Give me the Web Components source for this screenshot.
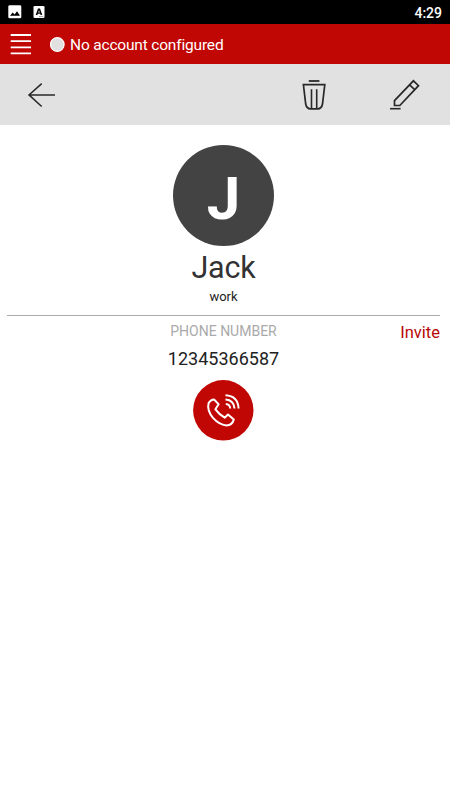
<!DOCTYPE html>
<html lang="en">
<head>
<meta charset="utf-8">
<title>Contact</title>
<style>
html,body{margin:0;height:100%;background:#fff}
body{font-family:Roboto,"Liberation Sans",sans-serif}
</style>
</head>
<body>
<contact-screen></contact-screen>
<script>
function define(name, html) {
  const template = document.createElement('template');
  template.innerHTML = html;
  customElements.define(name, class extends HTMLElement {
    constructor() {
      super();
      this.attachShadow({mode: 'open'}).append(template.content.cloneNode(true));
    }
  });
}

define('status-bar', `
<style>
:host{display:flex;align-items:center;height:24px;padding:0 8px;box-sizing:border-box;background:#000;color:#fff}
svg{display:block}
.a{margin-left:11px}
time{margin-left:auto;font-size:14px;line-height:16px;font-weight:500;padding-top:1px}
</style>
<svg width="14" height="14" viewBox="0 0 14 14"><rect x=".3" y=".3" width="13" height="13" rx="1.4" fill="#fff"/><path d="M2 10.8L4.7 7.5L6.6 9.6L9 6.2L12 10.8Z" fill="#000"/></svg>
<svg class="a" width="12" height="12" viewBox="0 0 12 12"><rect x=".5" y="0" width="11" height="12" rx="1.3" fill="#fff"/><path fill-rule="evenodd" d="M5 2.5H7L9.3 9H7.6L7.2 7.8H4.8L4.4 9H2.7ZM6 4.3L5.2 6.6H6.8Z" fill="#000"/><path d="M6 10.6H10.3" stroke="#777" stroke-width=".7"/></svg>
<time>4:29</time>`);

define('account-bar', `
<style>
:host{display:flex;align-items:center;height:40px;padding-left:10px;box-sizing:border-box;background:#c00704;color:#fff}
svg{display:block}
.dot{margin-left:18px}
span{margin-left:5px;font-size:15.5px;letter-spacing:-.18px;line-height:20px;padding-top:1px;white-space:nowrap}
</style>
<svg width="22" height="22" viewBox="0 0 22 22"><path d="M.7 2H21M.7 8.2H21M.7 14.3H21M.7 20.3H21" stroke="#fff" stroke-width="1.8"/></svg>
<svg class="dot" width="15" height="15" viewBox="0 0 15 15"><circle cx="7.3" cy="7.5" r="6.8" fill="#e1e1e1" stroke="#fff" stroke-width="1.2"/></svg>
<span><slot></slot></span>`);

define('action-bar', `
<style>
:host{display:flex;align-items:center;height:61px;padding:0 29px 0 27px;box-sizing:border-box;background:#e1e1e1}
svg{display:block;fill:none;stroke:#282828}
.trash{margin-left:auto}
.edit{margin-left:64px}
</style>
<svg width="30" height="30" viewBox="0 0 30 30"><path d="M28 14.9H2M14.7 3.6L2 14.9L14.7 26.5" stroke-width="1.5"/></svg>
<svg class="trash" width="24" height="32" viewBox="0 0 24 32"><path d="M6.8 2H17.4" stroke-width="1.8"/><path d="M1.4 5.6H22.8L20.5 25Q19.6 29.8 15.8 29.8H8.4Q4.6 29.8 3.7 25Z" stroke-width="1.7"/><path d="M9.5 10.2V29M14.7 10.2V29" stroke-width="1.6"/></svg>
<svg class="edit" width="31" height="32" viewBox="0 0 31 32"><path d="M4.5 26.5V21.7L23.4 1.8L28.5 6.7L9.8 26.5ZM19.6 5.8L24.7 10.7" stroke-width="1.7"/><path d="M0 29.7H10.6" stroke-width="1.6"/></svg>`);

define('contact-avatar', `
<style>
:host{display:grid;place-items:center;width:101px;height:101px;border-radius:50%;background:#434343;color:#fff;box-sizing:border-box;padding-top:7px;font-size:60px;line-height:70px;font-weight:700}
</style>
<slot></slot>`);

define('contact-header', `
<style>
:host{display:flex;flex-direction:column;align-items:center;height:191px;padding-top:20px;box-sizing:border-box;border-bottom:1px solid #aaa}
.name{font-size:30.5px;letter-spacing:-.2px;line-height:36px;margin-top:4px;color:#333}
.type{font-size:13px;line-height:16px;margin-top:3px;color:#222}
</style>
<slot name="avatar"></slot>
<div class="name"><slot name="name"></slot></div>
<div class="type"><slot name="type"></slot></div>`);

define('call-button', `
<style>
:host{display:block;width:61px;height:61px}
svg{display:block}
</style>
<svg width="61" height="61" viewBox="0 0 61 61" fill="none" stroke="#fff"><circle cx="30.3" cy="30.3" r="30.2" fill="#c00704" stroke="none"/><path d="M21 19.4L25.6 24.2L22.4 29.3Q26 34.2 31.7 37.7L35 34.5L40.8 39.6Q39.4 45.4 33.3 45.4Q26 44.5 20 37.8Q13.8 30.5 15.6 23Q18 19.5 21 19.4Z" stroke-width="2" stroke-linejoin="round"/><path d="M32.8 24Q36.9 24.2 37.2 28.5M32.5 19.6Q40.8 20 41.5 28.5M32.5 15.3Q45 16 45.6 28.5" stroke-width="2"/></svg>`);

define('phone-entry', `
<style>
:host{display:grid;grid-template-columns:1fr auto 1fr;grid-template-rows:25px;justify-items:center}
.label{grid-column:2;font-size:14px;line-height:18px;margin-top:6px;color:#aaa;white-space:nowrap}
.invite{grid-column:3;grid-row:1;justify-self:end;font-size:16.5px;line-height:20px;margin-top:7px;color:#b80704}
.number{grid-column:2;font-size:18px;line-height:22px;margin-top:7px;color:#222}
call-button{grid-column:2;margin-top:10px}
</style>
<div class="label"><slot name="label"></slot></div>
<div class="invite">Invite</div>
<div class="number"><slot name="number"></slot></div>
<call-button></call-button>`);

define('contact-screen', `
<style>
:host{display:flex;flex-direction:column;height:800px;background:#fff}
main{padding:0 10px 0 7px}
</style>
<status-bar></status-bar>
<account-bar>No account configured</account-bar>
<action-bar></action-bar>
<main>
<contact-header><contact-avatar slot="avatar">J</contact-avatar><span slot="name">Jack</span><span slot="type">work</span></contact-header>
<phone-entry><span slot="label">PHONE NUMBER</span><span slot="number">12345366587</span></phone-entry>
</main>`);
</script>
</body>
</html>
